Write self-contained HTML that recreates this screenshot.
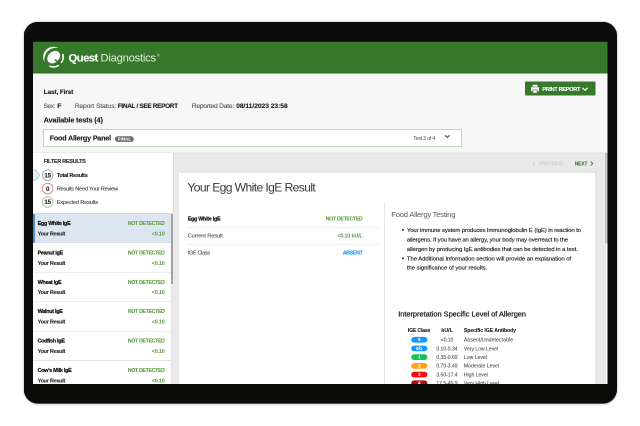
<!DOCTYPE html>
<html lang="en">
<head>
<meta charset="utf-8">
<title>Quest Diagnostics - Your Egg White IgE Result</title>
<style>
*{box-sizing:border-box;margin:0;padding:0}
html,body{width:640px;height:426px;background:#fff;overflow:hidden}
body{font-family:"Liberation Sans",Arial,Helvetica,sans-serif;color:#222;position:relative}
#tablet{position:absolute;left:24px;top:22.15px;width:592.6px;height:381.35px;background:#0b0b0a;border-radius:14px;box-shadow:0 .1px 1.8px rgba(30,30,25,.6)}
#frame{position:absolute;left:0;top:0;pointer-events:none}
#screen{position:absolute;left:33px;top:41px;width:575px;height:344px;background:#f7f7f7;overflow:hidden}
.tile{position:absolute;overflow:hidden}
.ui{position:absolute;left:0;top:0;overflow:hidden;transform:scale(0.5);transform-origin:0 0;will-change:transform}
.ui>div{position:absolute}
.ui>svg{position:absolute;left:0;top:0;font-family:"Liberation Sans",Arial,Helvetica,sans-serif}
.ui text{white-space:pre}
</style>
</head>
<body>
<div id="tablet"></div>
<div id="screen">
<div class="tile" style="left:0px;top:0px;width:192px;height:172px"><div class="ui" style="width:384px;height:344px">
<div style="left:0px;top:0px;width:1150px;height:64.6px;background:#37792b;"></div>
<div style="left:0px;top:63.1px;width:1150px;height:1.5px;background:#2d6d22;"></div>
<div style="left:0px;top:64.6px;width:1150px;height:2px;background:#fcfcfc;"></div>
<div style="left:20.6px;top:176.4px;width:837.6px;height:35.2px;background:#fff;border:1.7px solid #7db175"></div>
<div style="left:0px;top:224px;width:1150px;height:464px;background:#e9e9e9;"></div>
<div style="left:0px;top:223.2px;width:1150px;height:1.6px;background:#dedede;"></div>
<div style="left:0px;top:224px;width:280.6px;height:122px;background:#fff;"></div>
<div style="left:280.2px;top:224px;width:1.4px;height:121.5px;background:#d9d9d9;"></div>
<div style="left:0px;top:344px;width:280.6px;height:1.6px;background:#d8d8d8;"></div>
<div class="item sel" style="left:0px;top:345.5px;width:275px;height:58.8px;background:#dde6f0;border-left:4.4px solid #4f90cf;border-bottom:1.6px solid #d4d9de"></div>
<div style="left:275px;top:345.5px;width:5.2px;height:342px;background:#e8e8e8;"></div>
<div style="left:275.8px;top:345.5px;width:4px;height:140.2px;background:#a2a2a2;"></div>
<div style="left:291.2px;top:263.4px;width:833.4px;height:426px;background:#fff;box-shadow:0 0 2.4px rgba(0,0,0,.28)"></div>
<svg viewBox="33 41 192 172" width="384" height="344">
<g class="logo" transform="translate(53.4 57.0)">
<circle r="10.25" fill="#fff"/>
<circle cx="2.75" cy="2.6" r="11.85" fill="#37792b"/>
<path d="M9.46 -2.36 A9.75 9.75 0 0 1 8.18 5.31" fill="none" stroke="#fff" stroke-width="1.7" stroke-linecap="round" opacity="0.97"/>
<path d="M-3.39 9.30 A9.9 9.9 0 0 0 4.95 8.57" fill="none" stroke="#fff" stroke-width="1.6" stroke-linecap="round" opacity="0.97"/>
<ellipse cx="0.1" cy="0.3" rx="7.1" ry="5.4" fill="#fff" transform="rotate(-42)"/>
<path d="M1.3 2.6 L6.8 6.2" stroke="#37792b" stroke-width="1.5" fill="none"/>
</g>
<text x="68.5" y="61.6" font-size="11.2" fill="#fff" font-weight="bold" letter-spacing="-0.485" stroke="#fff" stroke-width="0.1" stroke-linejoin="round">Quest</text>
<text x="100.5" y="61.6" font-size="11.2" fill="#e3ede1" letter-spacing="-0.219">Diagnostics</text>
<text x="157.3" y="56.3" font-size="3.2" fill="#dbe8d9">®</text>
<text x="43.6" y="93.8" font-size="6.7" fill="#1a1a1a" font-weight="bold" letter-spacing="-0.222" stroke="#1a1a1a" stroke-width="0.1" stroke-linejoin="round">Last, First</text>
<text x="43.6" y="107.9" font-size="6.37" fill="#505050" letter-spacing="-0.319" stroke="#505050" stroke-width="0.1" stroke-linejoin="round">Sex:</text>
<text x="57.3" y="107.9" font-size="6.7" fill="#1a1a1a" font-weight="bold" stroke="#1a1a1a" stroke-width="0.1" stroke-linejoin="round">F</text>
<text x="74.6" y="107.9" font-size="6.7" fill="#505050" letter-spacing="-0.079" stroke="#505050" stroke-width="0.1" stroke-linejoin="round">Report Status:</text>
<text x="117.8" y="107.9" font-size="6.44" fill="#1a1a1a" font-weight="bold" letter-spacing="-0.322" stroke="#1a1a1a" stroke-width="0.1" stroke-linejoin="round">FINAL / SEE REPORT</text>
<text x="191.8" y="107.9" font-size="6.7" fill="#505050" letter-spacing="-0.226" stroke="#505050" stroke-width="0.1" stroke-linejoin="round">Reported Date:</text>
<text x="43.6" y="122.3" font-size="7.4" fill="#1a1a1a" font-weight="bold" letter-spacing="-0.180" stroke="#1a1a1a" stroke-width="0.1" stroke-linejoin="round">Available tests (4)</text>
<text x="49.7" y="140.7" font-size="7.2" fill="#1a1a1a" font-weight="bold" letter-spacing="-0.203" stroke="#1a1a1a" stroke-width="0.1" stroke-linejoin="round">Food Allergy Panel</text>
<rect x="115" y="136.2" width="18.8" height="5.7" rx="2.85" fill="#6b6b6b"/>
<text x="117.9" y="140.5" font-size="4.1" fill="#fff" font-weight="bold" letter-spacing="0.232" stroke="#fff" stroke-width="0.1" stroke-linejoin="round">FINAL</text>
<path d="M32.5 170.2h3.2l4 5l-4 5H32.5z" fill="#e2ecf8" stroke="#a3c4ea" stroke-width=".85" stroke-linejoin="round"/>
<text x="43.7" y="162.8" font-size="5.53" fill="#2a2a2a" font-weight="bold" letter-spacing="-0.277" stroke="#2a2a2a" stroke-width="0.1" stroke-linejoin="round">FILTER RESULTS</text>
<circle cx="47.65" cy="175.2" r="5.3" fill="#fff" stroke="#a6b0b5" stroke-width=".95"/>
<text x="44.4" y="177.35" font-size="6.1" fill="#222" font-weight="bold" letter-spacing="-0.183" stroke="#222" stroke-width="0.12" stroke-linejoin="round">15</text>
<text x="56.7" y="177" font-size="5.55" fill="#1a1a1a" font-weight="bold" letter-spacing="-0.277" stroke="#1a1a1a" stroke-width="0.1" stroke-linejoin="round">Total Results</text>
<circle cx="47.65" cy="188.6" r="5.3" fill="#fff" stroke="#e08783" stroke-width=".95"/>
<text x="46" y="190.75" font-size="6.1" fill="#222" font-weight="bold" letter-spacing="-0.183" stroke="#222" stroke-width="0.12" stroke-linejoin="round">0</text>
<text x="56.7" y="190.4" font-size="5.6" fill="#3a3a3a" letter-spacing="-0.210" stroke="#3a3a3a" stroke-width="0.1" stroke-linejoin="round">Results Need Your Review</text>
<circle cx="47.65" cy="202" r="5.3" fill="#fff" stroke="#a3cc9c" stroke-width=".95"/>
<text x="44.4" y="204.15" font-size="6.1" fill="#222" font-weight="bold" letter-spacing="-0.183" stroke="#222" stroke-width="0.12" stroke-linejoin="round">15</text>
<text x="56.7" y="203.8" font-size="5.6" fill="#3a3a3a" letter-spacing="-0.145" stroke="#3a3a3a" stroke-width="0.1" stroke-linejoin="round">Expected Results</text>
<text x="187.4" y="191.7" font-size="12.12" fill="#3a3a3a" letter-spacing="-0.606">Your Egg White IgE Result</text>
</svg>
</div></div>
<div class="tile" style="left:192px;top:0px;width:192px;height:172px"><div class="ui" style="width:384px;height:344px">
<div style="left:-384px;top:0px;width:1150px;height:64.6px;background:#37792b;"></div>
<div style="left:-384px;top:63.1px;width:1150px;height:1.5px;background:#2d6d22;"></div>
<div style="left:-384px;top:64.6px;width:1150px;height:2px;background:#fcfcfc;"></div>
<div style="left:-363.4px;top:176.4px;width:837.6px;height:35.2px;background:#fff;border:1.7px solid #7db175"></div>
<div style="left:-384px;top:224px;width:1150px;height:464px;background:#e9e9e9;"></div>
<div style="left:-384px;top:223.2px;width:1150px;height:1.6px;background:#dedede;"></div>
<div style="left:-92.8px;top:263.4px;width:833.4px;height:426px;background:#fff;box-shadow:0 0 2.4px rgba(0,0,0,.28)"></div>
<div style="left:318.2px;top:323px;width:1.4px;height:366px;background:#e6e6e6;"></div>
<svg viewBox="225 41 192 172" width="384" height="344">
<text x="191.8" y="107.9" font-size="6.7" fill="#505050" letter-spacing="-0.226" stroke="#505050" stroke-width="0.1" stroke-linejoin="round">Reported Date:</text>
<text x="236.2" y="107.9" font-size="6.7" fill="#1a1a1a" font-weight="bold" letter-spacing="-0.037" stroke="#1a1a1a" stroke-width="0.1" stroke-linejoin="round">08/11/2023 23:58</text>
<text x="413.3" y="139.9" font-size="5.32" fill="#4a4a4a" letter-spacing="-0.266">Test 3 of 4</text>
<text x="187.4" y="191.7" font-size="12.12" fill="#3a3a3a" letter-spacing="-0.606">Your Egg White IgE Result</text>
<text x="391.3" y="217.2" font-size="7.7" fill="#5a5a5a" letter-spacing="-0.258">Food Allergy Testing</text>
</svg>
</div></div>
<div class="tile" style="left:384px;top:0px;width:191px;height:172px"><div class="ui" style="width:382px;height:344px">
<div style="left:-768px;top:0px;width:1150px;height:64.6px;background:#37792b;"></div>
<div style="left:-768px;top:63.1px;width:1150px;height:1.5px;background:#2d6d22;"></div>
<div style="left:-768px;top:64.6px;width:1150px;height:2px;background:#fcfcfc;"></div>
<div style="left:215.6px;top:80.6px;width:141.2px;height:28.8px;background:#37792b;border-radius:2px"></div>
<div style="left:-747.4px;top:176.4px;width:837.6px;height:35.2px;background:#fff;border:1.7px solid #7db175"></div>
<div style="left:-768px;top:224px;width:1150px;height:464px;background:#e9e9e9;"></div>
<div style="left:-768px;top:223.2px;width:1150px;height:1.6px;background:#dedede;"></div>
<div style="left:377.6px;top:224px;width:4.8px;height:464px;background:#fbfbfb;"></div>
<div style="left:375.8px;top:224px;width:6.4px;height:181.2px;background:#c4c4c4;"></div>
<div style="left:-476.8px;top:263.4px;width:833.4px;height:426px;background:#fff;box-shadow:0 0 2.4px rgba(0,0,0,.28)"></div>
<svg viewBox="417 41 191 172" width="382" height="344">
<path class="printer" fill="#fff" d="M532.6 84.8h4.8v1.9h-4.8z M531 87.3h8v3.9h-1.5v-1.6h-5v1.6H531z M533.2 90.3h3.6v2.6h-3.6z"/>
<text x="542.2" y="90.75" font-size="5.54" fill="#fff" font-weight="bold" letter-spacing="-0.277" stroke="#fff" stroke-width="0.1" stroke-linejoin="round">PRINT REPORT</text>
<path d="M582.7 88.1l2.4 2.2l2.4-2.2" fill="none" stroke="#fff" stroke-width="1.15" stroke-linecap="round" stroke-linejoin="round"/>
<text x="413.3" y="139.9" font-size="5.32" fill="#4a4a4a" letter-spacing="-0.266">Test 3 of 4</text>
<path d="M445.3 135.6l2 1.9l2-1.9" fill="none" stroke="#2f6f25" stroke-width="1.2" stroke-linecap="round" stroke-linejoin="round"/>
<path d="M534.9 161.9l-1.6 1.7l1.6 1.7" fill="none" stroke="#c6c6c6" stroke-width=".8" stroke-linecap="round" stroke-linejoin="round"/>
<text x="539" y="165.5" font-size="5" fill="#c2c2c2" letter-spacing="-0.250">PREVIOUS</text>
<text x="574.7" y="165.5" font-size="5.09" fill="#3f7f33" font-weight="bold" letter-spacing="-0.254" stroke="#3f7f33" stroke-width="0.1" stroke-linejoin="round">NEXT</text>
<path d="M591 161.8l1.7 1.8l-1.7 1.8" fill="none" stroke="#3f7f33" stroke-width=".95" stroke-linecap="round" stroke-linejoin="round"/>
<text x="391.3" y="217.2" font-size="7.7" fill="#5a5a5a" letter-spacing="-0.258">Food Allergy Testing</text>
</svg>
</div></div>
<div class="tile" style="left:0px;top:172px;width:192px;height:172px"><div class="ui" style="width:384px;height:344px">
<div style="left:0px;top:-120px;width:1150px;height:464px;background:#e9e9e9;"></div>
<div style="left:0px;top:-120px;width:280.6px;height:122px;background:#fff;"></div>
<div style="left:280.2px;top:-120px;width:1.4px;height:121.5px;background:#d9d9d9;"></div>
<div style="left:0px;top:0px;width:280.6px;height:1.6px;background:#d8d8d8;"></div>
<div class="item sel" style="left:0px;top:1.5px;width:275px;height:58.8px;background:#dde6f0;border-left:4.4px solid #4f90cf;border-bottom:1.6px solid #d4d9de"></div>
<div class="item" style="left:0px;top:60.3px;width:275px;height:58.8px;background:#fff;border-bottom:1.6px solid #dcdcdc"></div>
<div class="item" style="left:0px;top:119.1px;width:275px;height:58.8px;background:#fff;border-bottom:1.6px solid #dcdcdc"></div>
<div class="item" style="left:0px;top:177.9px;width:275px;height:58.8px;background:#fff;border-bottom:1.6px solid #dcdcdc"></div>
<div class="item" style="left:0px;top:236.7px;width:275px;height:58.8px;background:#fff;border-bottom:1.6px solid #dcdcdc"></div>
<div class="item" style="left:0px;top:295.5px;width:275px;height:58.8px;background:#fff;border-bottom:1.6px solid #dcdcdc"></div>
<div style="left:275px;top:1.5px;width:5.2px;height:342px;background:#e8e8e8;"></div>
<div style="left:275.8px;top:1.5px;width:4px;height:140.2px;background:#a2a2a2;"></div>
<div style="left:291.2px;top:-80.6px;width:833.4px;height:426px;background:#fff;box-shadow:0 0 2.4px rgba(0,0,0,.28)"></div>
<div style="left:309.6px;top:27.6px;width:381.6px;height:1.4px;background:#dedede;"></div>
<div style="left:309.6px;top:62px;width:381.6px;height:1.4px;background:#dedede;"></div>
<svg viewBox="33 213 192 172" width="384" height="344">
<text x="37.6" y="225" font-size="5.41" fill="#141414" font-weight="bold" letter-spacing="-0.270" stroke="#141414" stroke-width="0.2" stroke-linejoin="round">Egg White IgE</text>
<text x="37.6" y="235.4" font-size="5.5" fill="#2e2e2e" font-weight="bold" letter-spacing="-0.275" stroke="#2e2e2e" stroke-width="0.12" stroke-linejoin="round">Your Result</text>
<text x="127.9" y="225" font-size="5.11" fill="#619c49" font-weight="bold" letter-spacing="-0.255" stroke="#619c49" stroke-width="0.1" stroke-linejoin="round">NOT DETECTED</text>
<text x="151.8" y="235.4" font-size="5.58" fill="#619c49" font-weight="bold" letter-spacing="-0.279">&lt;0.10</text>
<text x="37.6" y="254.4" font-size="5.41" fill="#141414" font-weight="bold" letter-spacing="-0.270" stroke="#141414" stroke-width="0.2" stroke-linejoin="round">Peanut IgE</text>
<text x="37.6" y="264.8" font-size="5.5" fill="#2e2e2e" font-weight="bold" letter-spacing="-0.275" stroke="#2e2e2e" stroke-width="0.12" stroke-linejoin="round">Your Result</text>
<text x="127.9" y="254.4" font-size="5.11" fill="#619c49" font-weight="bold" letter-spacing="-0.255" stroke="#619c49" stroke-width="0.1" stroke-linejoin="round">NOT DETECTED</text>
<text x="151.8" y="264.8" font-size="5.58" fill="#619c49" font-weight="bold" letter-spacing="-0.279">&lt;0.10</text>
<text x="37.6" y="283.8" font-size="5.41" fill="#141414" font-weight="bold" letter-spacing="-0.270" stroke="#141414" stroke-width="0.2" stroke-linejoin="round">Wheat IgE</text>
<text x="37.6" y="294.2" font-size="5.5" fill="#2e2e2e" font-weight="bold" letter-spacing="-0.275" stroke="#2e2e2e" stroke-width="0.12" stroke-linejoin="round">Your Result</text>
<text x="127.9" y="283.8" font-size="5.11" fill="#619c49" font-weight="bold" letter-spacing="-0.255" stroke="#619c49" stroke-width="0.1" stroke-linejoin="round">NOT DETECTED</text>
<text x="151.8" y="294.2" font-size="5.58" fill="#619c49" font-weight="bold" letter-spacing="-0.279">&lt;0.10</text>
<text x="37.6" y="313.2" font-size="5.41" fill="#141414" font-weight="bold" letter-spacing="-0.270" stroke="#141414" stroke-width="0.2" stroke-linejoin="round">Walnut IgE</text>
<text x="37.6" y="323.6" font-size="5.5" fill="#2e2e2e" font-weight="bold" letter-spacing="-0.275" stroke="#2e2e2e" stroke-width="0.12" stroke-linejoin="round">Your Result</text>
<text x="127.9" y="313.2" font-size="5.11" fill="#619c49" font-weight="bold" letter-spacing="-0.255" stroke="#619c49" stroke-width="0.1" stroke-linejoin="round">NOT DETECTED</text>
<text x="151.8" y="323.6" font-size="5.58" fill="#619c49" font-weight="bold" letter-spacing="-0.279">&lt;0.10</text>
<text x="37.6" y="342.6" font-size="5.41" fill="#141414" font-weight="bold" letter-spacing="-0.270" stroke="#141414" stroke-width="0.2" stroke-linejoin="round">Codfish IgE</text>
<text x="37.6" y="353" font-size="5.5" fill="#2e2e2e" font-weight="bold" letter-spacing="-0.275" stroke="#2e2e2e" stroke-width="0.12" stroke-linejoin="round">Your Result</text>
<text x="127.9" y="342.6" font-size="5.11" fill="#619c49" font-weight="bold" letter-spacing="-0.255" stroke="#619c49" stroke-width="0.1" stroke-linejoin="round">NOT DETECTED</text>
<text x="151.8" y="353" font-size="5.58" fill="#619c49" font-weight="bold" letter-spacing="-0.279">&lt;0.10</text>
<text x="37.6" y="372" font-size="5.41" fill="#141414" font-weight="bold" letter-spacing="-0.270" stroke="#141414" stroke-width="0.2" stroke-linejoin="round">Cow's Milk IgE</text>
<text x="37.6" y="382.4" font-size="5.5" fill="#2e2e2e" font-weight="bold" letter-spacing="-0.275" stroke="#2e2e2e" stroke-width="0.12" stroke-linejoin="round">Your Result</text>
<text x="127.9" y="372" font-size="5.11" fill="#619c49" font-weight="bold" letter-spacing="-0.255" stroke="#619c49" stroke-width="0.1" stroke-linejoin="round">NOT DETECTED</text>
<text x="151.8" y="382.4" font-size="5.58" fill="#619c49" font-weight="bold" letter-spacing="-0.279">&lt;0.10</text>
<text x="187.7" y="220.4" font-size="5.39" fill="#141414" font-weight="bold" letter-spacing="-0.270" stroke="#141414" stroke-width="0.2" stroke-linejoin="round">Egg White IgE</text>
<text x="187.7" y="237.3" font-size="5.7" fill="#505050" letter-spacing="-0.127" stroke="#505050" stroke-width="0.12" stroke-linejoin="round">Current Result</text>
<text x="187.7" y="254.4" font-size="5.46" fill="#505050" letter-spacing="-0.273" stroke="#505050" stroke-width="0.12" stroke-linejoin="round">IGE Class</text>
</svg>
</div></div>
<div class="tile" style="left:192px;top:172px;width:192px;height:172px"><div class="ui" style="width:384px;height:344px">
<div style="left:-384px;top:-120px;width:1150px;height:464px;background:#e9e9e9;"></div>
<div style="left:-92.8px;top:-80.6px;width:833.4px;height:426px;background:#fff;box-shadow:0 0 2.4px rgba(0,0,0,.28)"></div>
<div style="left:-74.4px;top:27.6px;width:381.6px;height:1.4px;background:#dedede;"></div>
<div style="left:-74.4px;top:62px;width:381.6px;height:1.4px;background:#dedede;"></div>
<div style="left:318.2px;top:-21px;width:1.4px;height:366px;background:#e6e6e6;"></div>
<svg viewBox="225 213 192 172" width="384" height="344">
<text x="325.8" y="220.4" font-size="5.12" fill="#619c49" font-weight="bold" letter-spacing="-0.256" stroke="#619c49" stroke-width="0.1" stroke-linejoin="round">NOT DETECTED</text>
<text x="337.2" y="237.3" font-size="5.5" fill="#619c49" font-weight="bold" letter-spacing="-0.196">&lt;0.10 kU/L</text>
<text x="342.7" y="254.4" font-size="5.21" fill="#2196f3" font-weight="bold" letter-spacing="-0.260" stroke="#2196f3" stroke-width="0.1" stroke-linejoin="round">ABSENT</text>
<text x="391.3" y="217.2" font-size="7.7" fill="#5a5a5a" letter-spacing="-0.258">Food Allergy Testing</text>
<rect x="402.1" y="229.05" width="1.7" height="1.7" rx=".45" fill="#222"/>
<text x="406.9" y="231.8" font-size="5.9" fill="#222" letter-spacing="-0.081" stroke="#222" stroke-width="0.16" stroke-linejoin="round">Your immune system produces Immunoglobulin E (IgE) in reaction to</text>
<text x="406.9" y="241.4" font-size="5.9" fill="#222" letter-spacing="-0.095" stroke="#222" stroke-width="0.16" stroke-linejoin="round">allergens. If you have an allergy, your body may overreact to the</text>
<text x="406.9" y="250.8" font-size="5.9" fill="#222" letter-spacing="-0.049" stroke="#222" stroke-width="0.16" stroke-linejoin="round">allergen by producing IgE antibodies that can be detected in a test.</text>
<rect x="402.1" y="257.55" width="1.7" height="1.7" rx=".45" fill="#222"/>
<text x="406.9" y="260.3" font-size="5.9" fill="#222" letter-spacing="-0.028" stroke="#222" stroke-width="0.16" stroke-linejoin="round">The Additional Information section will provide an explanation of</text>
<text x="406.9" y="269.7" font-size="5.9" fill="#222" letter-spacing="-0.016" stroke="#222" stroke-width="0.16" stroke-linejoin="round">the significance of your results.</text>
<text x="398.2" y="316.7" font-size="7.4" fill="#222" letter-spacing="-0.009" stroke="#222" stroke-width="0.26" stroke-linejoin="round">Interpretation Specific Level of Allergen</text>
<text x="407.9" y="332.2" font-size="5.2" fill="#222" font-weight="bold" letter-spacing="-0.210" stroke="#222" stroke-width="0.1" stroke-linejoin="round">IGE Class</text>
<rect x="411.2" y="336.9" width="16.2" height="5.7" rx="2.85" fill="#1a97fc"/>
<rect x="411.2" y="345.6" width="16.2" height="5.7" rx="2.85" fill="#1a97fc"/>
<text x="416.31" y="349.9" font-size="4.3" fill="#fff" font-weight="bold" stroke="#fff" stroke-width="0.12" stroke-linejoin="round">0/1</text>
<rect x="411.2" y="354.3" width="16.2" height="5.7" rx="2.85" fill="#0fc558"/>
<rect x="411.2" y="363" width="16.2" height="5.7" rx="2.85" fill="#ffa216"/>
<rect x="411.2" y="371.7" width="16.2" height="5.7" rx="2.85" fill="#fa0913"/>
<rect x="411.2" y="380.4" width="16.2" height="5.7" rx="2.85" fill="#b30e12"/>
</svg>
</div></div>
<div class="tile" style="left:384px;top:172px;width:191px;height:172px"><div class="ui" style="width:382px;height:344px">
<div style="left:-768px;top:-120px;width:1150px;height:464px;background:#e9e9e9;"></div>
<div style="left:377.6px;top:-120px;width:4.8px;height:464px;background:#fbfbfb;"></div>
<div style="left:375.8px;top:-120px;width:6.4px;height:181.2px;background:#c4c4c4;"></div>
<div style="left:-476.8px;top:-80.6px;width:833.4px;height:426px;background:#fff;box-shadow:0 0 2.4px rgba(0,0,0,.28)"></div>
<svg viewBox="417 213 191 172" width="382" height="344">
<text x="391.3" y="217.2" font-size="7.7" fill="#5a5a5a" letter-spacing="-0.258">Food Allergy Testing</text>
<text x="406.9" y="231.8" font-size="5.9" fill="#222" letter-spacing="-0.081" stroke="#222" stroke-width="0.16" stroke-linejoin="round">Your immune system produces Immunoglobulin E (IgE) in reaction to</text>
<text x="406.9" y="241.4" font-size="5.9" fill="#222" letter-spacing="-0.095" stroke="#222" stroke-width="0.16" stroke-linejoin="round">allergens. If you have an allergy, your body may overreact to the</text>
<text x="406.9" y="250.8" font-size="5.9" fill="#222" letter-spacing="-0.049" stroke="#222" stroke-width="0.16" stroke-linejoin="round">allergen by producing IgE antibodies that can be detected in a test.</text>
<text x="406.9" y="260.3" font-size="5.9" fill="#222" letter-spacing="-0.028" stroke="#222" stroke-width="0.16" stroke-linejoin="round">The Additional Information section will provide an explanation of</text>
<text x="406.9" y="269.7" font-size="5.9" fill="#222" letter-spacing="-0.016" stroke="#222" stroke-width="0.16" stroke-linejoin="round">the significance of your results.</text>
<text x="398.2" y="316.7" font-size="7.4" fill="#222" letter-spacing="-0.009" stroke="#222" stroke-width="0.26" stroke-linejoin="round">Interpretation Specific Level of Allergen</text>
<text x="407.9" y="332.2" font-size="5.2" fill="#222" font-weight="bold" letter-spacing="-0.210" stroke="#222" stroke-width="0.1" stroke-linejoin="round">IGE Class</text>
<text x="441.4" y="332.2" font-size="5.2" fill="#222" font-weight="bold" letter-spacing="0.044" stroke="#222" stroke-width="0.1" stroke-linejoin="round">kU/L</text>
<text x="463.9" y="332.2" font-size="5.2" fill="#222" font-weight="bold" letter-spacing="-0.091" stroke="#222" stroke-width="0.1" stroke-linejoin="round">Specific IGE Antibody</text>
<rect x="411.2" y="336.9" width="16.2" height="5.7" rx="2.85" fill="#1a97fc"/>
<text x="418.1" y="341.2" font-size="4.3" fill="#fff" font-weight="bold" stroke="#fff" stroke-width="0.12" stroke-linejoin="round">0</text>
<text x="440.8" y="341.6" font-size="5.1" fill="#4c4c4c" letter-spacing="-0.076" stroke="#4c4c4c" stroke-width="0.08" stroke-linejoin="round">&lt;0.10</text>
<text x="463.9" y="341.6" font-size="5.1" fill="#4c4c4c" letter-spacing="0.108" stroke="#4c4c4c" stroke-width="0.08" stroke-linejoin="round">Absent/Undetectable</text>
<rect x="411.2" y="345.6" width="16.2" height="5.7" rx="2.85" fill="#1a97fc"/>
<text x="416.31" y="349.9" font-size="4.3" fill="#fff" font-weight="bold" stroke="#fff" stroke-width="0.12" stroke-linejoin="round">0/1</text>
<text x="436.4" y="350.3" font-size="5.1" fill="#4c4c4c" letter-spacing="-0.044" stroke="#4c4c4c" stroke-width="0.08" stroke-linejoin="round">0.10-0.34</text>
<text x="463.9" y="350.3" font-size="5.1" fill="#4c4c4c" letter-spacing="-0.030" stroke="#4c4c4c" stroke-width="0.08" stroke-linejoin="round">Very Low Level</text>
<rect x="411.2" y="354.3" width="16.2" height="5.7" rx="2.85" fill="#0fc558"/>
<text x="418.1" y="358.6" font-size="4.3" fill="#fff" font-weight="bold" stroke="#fff" stroke-width="0.12" stroke-linejoin="round">1</text>
<text x="436.4" y="359" font-size="5.1" fill="#4c4c4c" letter-spacing="-0.044" stroke="#4c4c4c" stroke-width="0.08" stroke-linejoin="round">0.35-0.69</text>
<text x="463.9" y="359" font-size="5.1" fill="#4c4c4c" letter-spacing="0.004" stroke="#4c4c4c" stroke-width="0.08" stroke-linejoin="round">Low Level</text>
<rect x="411.2" y="363" width="16.2" height="5.7" rx="2.85" fill="#ffa216"/>
<text x="418.1" y="367.3" font-size="4.3" fill="#fff" font-weight="bold" stroke="#fff" stroke-width="0.12" stroke-linejoin="round">2</text>
<text x="436.4" y="367.7" font-size="5.1" fill="#4c4c4c" letter-spacing="-0.044" stroke="#4c4c4c" stroke-width="0.08" stroke-linejoin="round">0.70-3.49</text>
<text x="463.9" y="367.7" font-size="5.1" fill="#4c4c4c" letter-spacing="-0.004" stroke="#4c4c4c" stroke-width="0.08" stroke-linejoin="round">Moderate Level</text>
<rect x="411.2" y="371.7" width="16.2" height="5.7" rx="2.85" fill="#fa0913"/>
<text x="418.1" y="376" font-size="4.3" fill="#fff" font-weight="bold" stroke="#fff" stroke-width="0.12" stroke-linejoin="round">3</text>
<text x="436.4" y="376.4" font-size="5.1" fill="#4c4c4c" letter-spacing="-0.044" stroke="#4c4c4c" stroke-width="0.08" stroke-linejoin="round">3.50-17.4</text>
<text x="463.9" y="376.4" font-size="5.1" fill="#4c4c4c" letter-spacing="-0.022" stroke="#4c4c4c" stroke-width="0.08" stroke-linejoin="round">High Level</text>
<rect x="411.2" y="380.4" width="16.2" height="5.7" rx="2.85" fill="#b30e12"/>
<text x="418.1" y="384.7" font-size="4.3" fill="#fff" font-weight="bold" stroke="#fff" stroke-width="0.12" stroke-linejoin="round">4</text>
<text x="436.4" y="385.1" font-size="5.1" fill="#4c4c4c" letter-spacing="-0.044" stroke="#4c4c4c" stroke-width="0.08" stroke-linejoin="round">17.5-49.9</text>
<text x="463.9" y="385.1" font-size="5.1" fill="#4c4c4c" letter-spacing="-0.023" stroke="#4c4c4c" stroke-width="0.08" stroke-linejoin="round">Very High Level</text>
</svg>
</div></div>
</div>
<svg id="frame" width="640" height="426" viewBox="0 0 640 426"><path fill="#0b0b0a" fill-rule="evenodd" d="M38 22.15H602.6a14 14 0 0 1 14 14V389.5a14 14 0 0 1 -14 14H38a14 14 0 0 1 -14 -14V36.15a14 14 0 0 1 14 -14z M33 41.85V384.1H607.5V41.85z"/></svg>
</body>
</html>
